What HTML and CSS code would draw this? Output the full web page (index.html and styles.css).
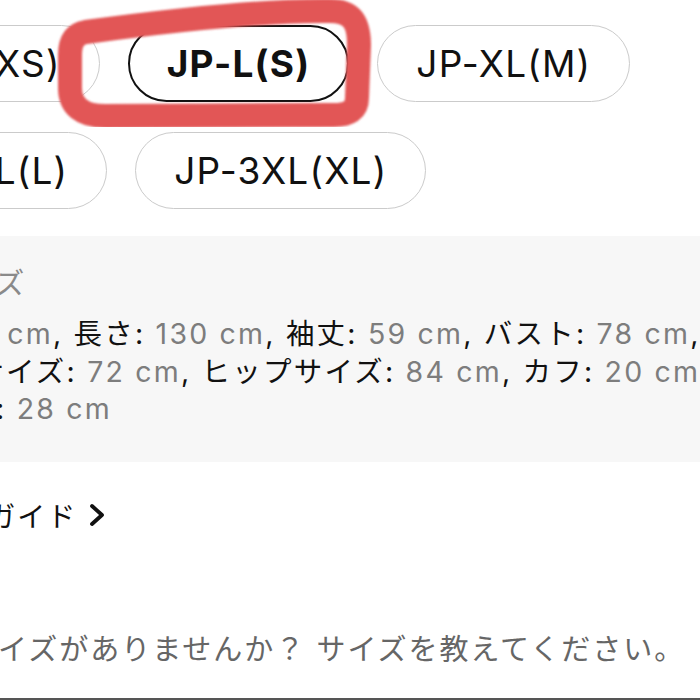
FILE: index.html
```html
<!DOCTYPE html>
<html lang="ja">
<head>
<meta charset="utf-8">
<title>サイズ選択</title>
<link rel="stylesheet" href="styles.css">
</head>
<body>
<div class="viewport">
  <div class="page">
    <div class="sizes">
      <div class="pill">JP-M(XS)</div>
      <div class="pill selected">JP-L(S)</div>
      <div class="pill">JP-XL(M)</div>
      <div class="pill">JP-2XL(L)</div>
      <div class="pill">JP-3XL(XL)</div>
    </div>
    <div class="info">
      <div class="info-title">商品のサイズ</div>
      <div class="info-line first"><span class="k">肩幅:</span> <span class="v">38.5 cm</span>, <span class="k">長さ:</span> <span class="v">130 cm</span>, <span class="k">袖丈:</span> <span class="v">59 cm</span>, <span class="k">バスト:</span> <span class="v">78 cm</span>,</div>
      <div class="info-line"><span class="k">ウエストサイズ:</span> <span class="v">72 cm</span>, <span class="k">ヒップサイズ:</span> <span class="v">84 cm</span>, <span class="k">カフ:</span> <span class="v">20 cm</span>,</div>
      <div class="info-line last"><span class="k">太もも周り:</span> <span class="v">28 cm</span></div>
    </div>
    <div class="guide">
      <span class="guide-text">サイズガイド</span>
      <svg class="chev" width="16" height="24" viewBox="0 0 16 24"><polyline points="3,3 13,12 3,21" fill="none" stroke="#111" stroke-width="3.8" stroke-linecap="round" stroke-linejoin="round"/></svg>
    </div>
    <div class="hint">ご希望のサイズがありませんか？ サイズを教えてください。</div>
    <div class="rule"></div>
  </div>
  <svg class="mark" width="700" height="150" viewBox="0 0 700 150">
    <defs><filter id="soft"><feGaussianBlur stdDeviation="1.2"/></filter></defs>
    <path d="M 86 32 C 160 22, 260 10, 330 11 C 352 11, 359 22, 359 45 L 357 98 C 357 110, 349 115, 334 115 L 105 116 C 82 116, 70 106, 70 88 L 70 55 C 70 41, 75 34, 86 32 Z" fill="none" stroke="#e25757" stroke-width="24" stroke-linejoin="round" filter="url(#soft)"/>
  </svg>
</div>
</body>
</html>
```

FILE: styles.css
```css
body {
  margin: 0;
  background: #fff;
}

.viewport {
  position: relative;
  width: 700px;
  height: 700px;
  overflow: hidden;
  font-family: "Inter", "Noto Sans CJK JP", sans-serif;
  color: #111;
}

.page {
  margin-left: -157px;
  width: 1000px;
  padding-top: 25px;
}

.sizes {
  display: flex;
  flex-wrap: wrap;
  gap: 30px 28px;
  width: 880px;
}

.pill {
  box-sizing: border-box;
  height: 77px;
  padding: 0 38px;
  border: 1px solid #cbcbcb;
  border-radius: 39px;
  display: flex;
  align-items: center;
  font-size: 37px;
  letter-spacing: 1.2px;
  color: #111;
  white-space: nowrap;
}

.pill.selected {
  border: 2px solid #111;
  padding: 0 37px;
  font-weight: 700;
}

.info {
  box-sizing: border-box;
  margin-top: 27px;
  height: 226px;
  padding: 29px 0 0 9.5px;
  background: #f7f7f7;
}

.info-title {
  font-size: 29px;
  line-height: 38px;
  letter-spacing: 0.5px;
  color: #8a8a8a;
  margin-bottom: 12px;
  text-indent: -4px;
}

.info-line {
  font-size: 28.5px;
  line-height: 37.5px;
  letter-spacing: 2.2px;
  white-space: nowrap;
}

.info-line.first {
  text-indent: -6px;
}

.info-line.last {
  text-indent: -10px;
}

.v {
  color: #7d7d7d;
}

.guide {
  margin-top: 34px;
  padding-left: 55px;
  display: flex;
  align-items: center;
  gap: 12px;
  height: 38px;
  font-size: 28px;
  letter-spacing: 2px;
}

.hint {
  margin-top: 97px;
  font-size: 29px;
  line-height: 38px;
  letter-spacing: 2px;
  color: #666;
  white-space: nowrap;
}

.rule {
  margin-top: 29px;
  border-top: 2px solid #555;
}

.mark {
  position: absolute;
  left: 0;
  top: 0;
  pointer-events: none;
}
```
